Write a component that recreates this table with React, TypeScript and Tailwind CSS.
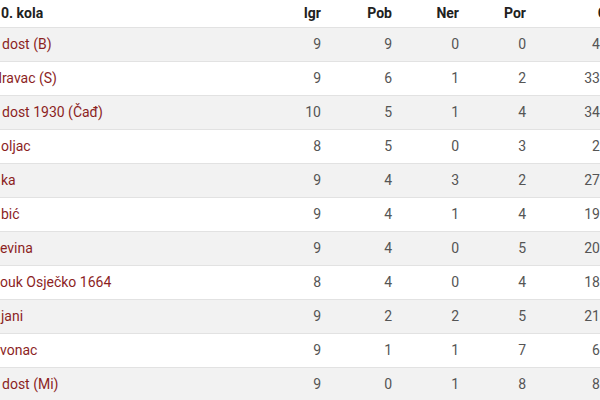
const rows = [
  { name: 'dost (B)', shift: 'ml-[2px]', igr: 9, pob: 9, ner: 0, por: 0, gol: '42:4' },
  { name: 'dravac (S)', shift: '-ml-[6px]', igr: 9, pob: 6, ner: 1, por: 2, gol: '33:14' },
  { name: 'dost 1930 (Čađ)', shift: 'ml-[2px]', igr: 10, pob: 5, ner: 1, por: 4, gol: '34:16' },
  { name: 'oljac', shift: 'ml-[1px]', igr: 8, pob: 5, ner: 0, por: 3, gol: '25:9' },
  { name: 'ka', shift: 'ml-[1px]', igr: 9, pob: 4, ner: 3, por: 2, gol: '27:20' },
  { name: 'bić', shift: 'ml-[1px]', igr: 9, pob: 4, ner: 1, por: 4, gol: '19:22' },
  { name: 'evina', shift: 'ml-0', igr: 9, pob: 4, ner: 0, por: 5, gol: '20:18' },
  { name: 'ouk Osječko 1664', shift: 'ml-0', igr: 8, pob: 4, ner: 0, por: 4, gol: '18:21' },
  { name: 'jani', shift: 'ml-[1px]', igr: 9, pob: 2, ner: 2, por: 5, gol: '21:24' },
  { name: 'vonac', shift: 'ml-0', igr: 9, pob: 1, ner: 1, por: 7, gol: '6:29' },
  { name: 'dost (Mi)', shift: 'ml-[2px]', igr: 9, pob: 0, ner: 1, por: 8, gol: '8:38' },
];

const cols = 'grid grid-cols-[281px_40px_71px_67px_67px_93px]';

export default function App() {
  return (
    <div className="w-[600px] h-[400px] overflow-hidden bg-white" style={{ fontFamily: 'Roboto, sans-serif' }}>
      <div className="w-[619px] text-[14px]">
        <div className={`${cols} h-[27px] items-center font-bold text-[#212121]`}>
          <div className="ml-px whitespace-nowrap">0. kola</div>
          <div className="text-right">Igr</div>
          <div className="text-right">Pob</div>
          <div className="text-right">Ner</div>
          <div className="text-right">Por</div>
          <div className="text-right">Gol</div>
        </div>
        {rows.map((r, i) => (
          <div
            key={i}
            className={`${cols} h-[34px] items-center border-t border-[#e2e2e2] text-[#555] ${i % 2 === 0 ? 'bg-[#f2f2f2]' : 'bg-white'}`}
          >
            <div className="overflow-hidden whitespace-nowrap">
              <span className={`inline-block text-[#8c1f1f] ${r.shift}`}>{r.name}</span>
            </div>
            <div className="text-right">{r.igr}</div>
            <div className="text-right">{r.pob}</div>
            <div className="text-right">{r.ner}</div>
            <div className="text-right">{r.por}</div>
            <div className="text-right">{r.gol}</div>
          </div>
        ))}
      </div>
    </div>
  );
}
